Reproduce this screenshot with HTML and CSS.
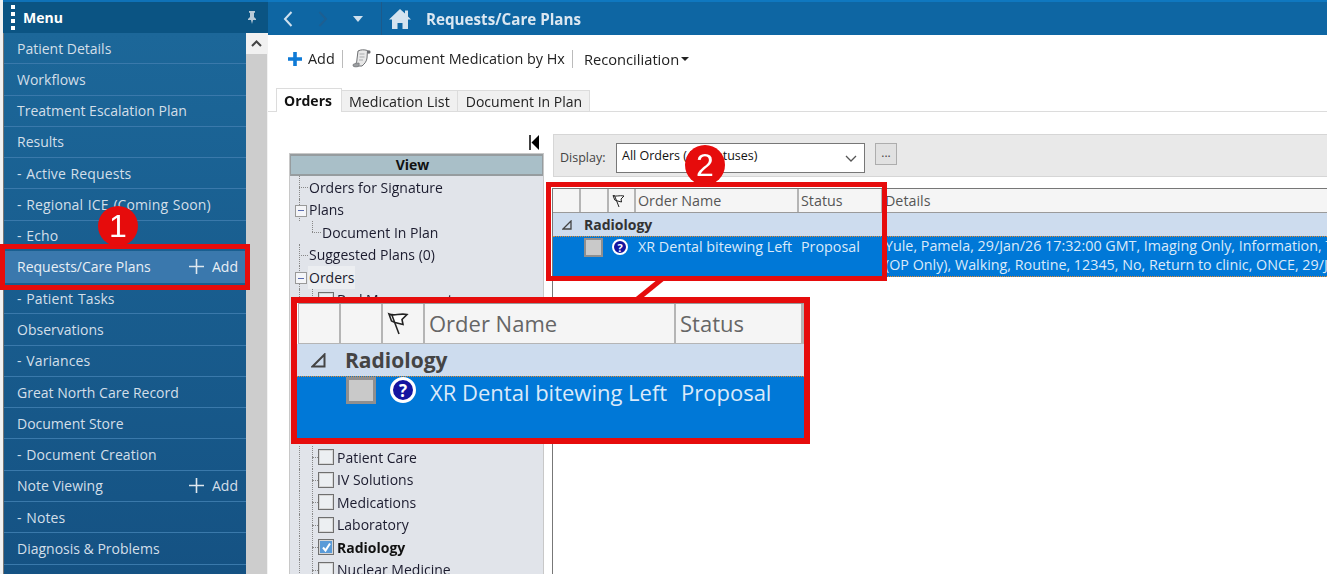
FILE: index.html
```html
<!DOCTYPE html>
<html lang="en">
<head>
<meta charset="utf-8">
<title>Requests/Care Plans</title>
<link rel="stylesheet" href="styles.css">
</head>
<body>
<div class="app">
  <aside class="side">
    <div class="menu-head">
      <span class="grip"><i></i><i></i><i></i><i></i></span>
      <span class="menu-title">Menu</span>
      <svg class="pin" width="10" height="13" viewBox="0 0 10 13"><path d="M2 0h6v1.500l-1 .5v4l2 2v1H6l-1 4-1-4H1V8l2-2V2l-1-.5z" fill="#b9cbd9"/></svg>
    </div>
    <div class="side-body">
      <nav class="nav">
        <div class="nav-row">Patient Details</div>
        <div class="nav-row">Workflows</div>
        <div class="nav-row">Treatment Escalation Plan</div>
        <div class="nav-row">Results</div>
        <div class="nav-row sub">- Active Requests</div>
        <div class="nav-row sub">- Regional ICE (Coming Soon)</div>
        <div class="nav-row sub">- Echo</div>
        <div class="nav-row active"><span>Requests/Care Plans</span><span class="add"><svg width="15" height="15" viewBox="0 0 15 15"><path d="M7.500 0v15M0 7.500h15" stroke="#dfe8ef" stroke-width="1.600"/></svg>Add</span></div>
        <div class="nav-row sub">- Patient Tasks</div>
        <div class="nav-row">Observations</div>
        <div class="nav-row sub">- Variances</div>
        <div class="nav-row">Great North Care Record</div>
        <div class="nav-row">Document Store</div>
        <div class="nav-row sub">- Document Creation</div>
        <div class="nav-row"><span>Note Viewing</span><span class="add"><svg width="15" height="15" viewBox="0 0 15 15"><path d="M7.500 0v15M0 7.500h15" stroke="#dfe8ef" stroke-width="1.600"/></svg>Add</span></div>
        <div class="nav-row sub">- Notes</div>
        <div class="nav-row">Diagnosis &amp; Problems</div>
        <div class="nav-row sub">- Allergies</div>
      </nav>
      <div class="scroll">
        <div class="scroll-btn"><svg width="11" height="7" viewBox="0 0 11 7"><path d="M1 6l4.500-4.500L10 6" fill="none" stroke="#444" stroke-width="2"/></svg></div>
      </div>
    </div>
  </aside>

  <main class="main">
    <header class="topbar">
      <div class="navbtns">
        <svg width="10" height="16" viewBox="0 0 10 16"><path d="M8.500 1L2 8l6.500 7" fill="none" stroke="#cfe0ee" stroke-width="2"/></svg>
        <svg width="10" height="16" viewBox="0 0 10 16"><path d="M1.500 1L8 8l-6.500 7" fill="none" stroke="#1d5f92" stroke-width="2"/></svg>
        <svg width="10" height="6" viewBox="0 0 10 6"><path d="M0 0h10L5 6z" fill="#cfe0ee"/></svg>
      </div>
      <svg class="home" width="22" height="20" viewBox="0 0 22 20"><path d="M11 0L0 10.500h3V20h5.500v-6h5v6H19v-9.500h3l-3-3V1.500h-3v3z" fill="#d4e3ef"/></svg>
      <h1 class="page-title">Requests/Care Plans</h1>
    </header>

    <div class="toolbar">
      <span class="tool"><svg width="14" height="14" viewBox="0 0 14 14"><path d="M7 0v14M0 7h14" stroke="#0e7ad6" stroke-width="3.600"/></svg>Add</span>
      <span class="tool-sep"></span>
      <span class="tool doc"><svg width="19" height="19" viewBox="0 0 19 19"><path d="M6 2c3-1.500 6-1.500 9.500-.5L15 9c-.3 3-2 5.500-5 8H2c2-2 3-4 3-7z" fill="#e8e8e8" stroke="#6d6f72"/><path d="M1 15.500c1.500-1 3.500-1.500 6-1.500.5 1 .3 2-.7 3.500-2 .7-4.300.5-5.300-.5z" fill="#9a9da0" stroke="#6d6f72" stroke-width=".6"/><path d="M7.500 5h5M7.500 8h5M7 11h4" stroke="#a9abae"/><circle cx="16.800" cy="3" r="1.800" fill="#6d6f72"/></svg>Document Medication by Hx</span>
      <span class="tool-sep"></span>
      <span class="tool recon">Reconciliation<i class="caret"></i></span>
    </div>

    <div class="tabs">
      <span class="tab current">Orders</span>
      <span class="tab">Medication List</span>
      <span class="tab last">Document In Plan</span>
    </div>

    <div class="content">
      <section class="view">
        <div class="collapse"><svg width="11" height="15" viewBox="0 0 11 15"><path d="M1 0v15" stroke="#000" stroke-width="1.500"/><path d="M10 0v15L2.500 7.500z" fill="#000"/></svg></div>
        <div class="view-panel">
          <div class="view-head">View</div>
          <ul class="tree">
            <li class="t0">Orders for Signature</li>
            <li class="t0 exp">Plans</li>
            <li class="t1">Document In Plan</li>
            <li class="t0">Suggested Plans (0)</li>
            <li class="t0 exp"><span class="hl">Orders</span></li>
            <li class="t2"><i class="cb"></i>Bed Management</li>
            <li class="gap"></li>
            <li class="t2"><i class="cb"></i>Patient Care</li>
            <li class="t2"><i class="cb"></i>IV Solutions</li>
            <li class="t2"><i class="cb"></i>Medications</li>
            <li class="t2"><i class="cb"></i>Laboratory</li>
            <li class="t2 strong"><i class="cb on"><svg width="11" height="11" viewBox="0 0 11 11"><path d="M2 5.500l2.500 3L9 1.500" fill="none" stroke="#fff" stroke-width="2"/></svg></i>Radiology</li>
            <li class="t2"><i class="cb"></i>Nuclear Medicine</li>
          </ul>
        </div>
      </section>

      <section class="orders">
        <div class="display">
          <span class="display-label">Display:</span>
          <span class="select">All Orders (All Statuses)<svg width="12" height="7" viewBox="0 0 12 7"><path d="M1 1l5 5 5-5" fill="none" stroke="#555" stroke-width="1.300"/></svg></span>
          <span class="more">...</span>
        </div>
        <div class="grid">
          <div class="g-head">
            <span class="c1"></span><span class="c2"></span>
            <span class="c3"><svg width="13" height="14" viewBox="0 0 13 14"><path d="M1 1.500c3 1.500 6-.5 11 .5L9 5l.5 3L5 6.800 2.800 6z" fill="#fff" stroke="#222"/><path d="M2.500 1.500L7 13" stroke="#222"/></svg></span>
            <span class="c4">Order Name</span><span class="c5">Status</span><span class="c6">Details</span>
          </div>
          <div class="g-group"><svg class="tri" width="10" height="10" viewBox="0 0 10 10"><path d="M1 9l8-8v8z" fill="none" stroke="#444" stroke-width="1.300"/></svg>Radiology</div>
          <div class="g-row">
            <span class="c1"></span>
            <span class="c2"><i class="gray-cb"></i></span>
            <span class="c3"><i class="q">?</i></span>
            <span class="c4">XR Dental bitewing Left</span>
            <span class="c5">Proposal</span>
            <span class="c6">Yule, Pamela, 29/Jan/26 17:32:00 GMT, Imaging Only, Information, Test<br>(OP Only), Walking, Routine, 12345, No, Return to clinic, ONCE, 29/Jan/26</span>
          </div>
        </div>
      </section>
    </div>
  </main>
</div>

<div class="hi hi-nav"></div>
<div class="hi hi-grid"></div>
<svg class="connector" width="40" height="24" viewBox="0 0 40 24"><path d="M33 0L6 22" stroke="#e60c0c" stroke-width="5"/></svg>
<div class="badge b1">1</div>
<div class="badge b2">2</div>

<div class="magnify">
  <div class="m-head">
    <span class="m1"></span><span class="m2"></span>
    <span class="m3"><svg width="22" height="24" viewBox="0 0 22 24"><path d="M2 3c5 2.500 10-1 18 .5L15 8.500l1 5-8-2-3.500-1.500z" fill="#fff" stroke="#222" stroke-width="1.600"/><path d="M4.500 3L12 23" stroke="#222" stroke-width="1.600"/></svg></span>
    <span class="m4">Order Name</span><span class="m5">Status</span>
  </div>
  <div class="m-group"><svg class="m-tri" width="15" height="15" viewBox="0 0 15 15"><path d="M1.500 13.500l12-12v12z" fill="none" stroke="#444" stroke-width="2"/></svg>Radiology</div>
  <div class="m-row">
    <i class="m-cb"></i><i class="m-q">?</i>
    <span class="m-name">XR Dental bitewing Left</span><span class="m-status">Proposal</span>
  </div>
</div>
</body>
</html>
```
FILE: styles.css
```css
* { box-sizing: border-box; }
html, body { margin: 0; height: 574px; overflow: hidden; background: #fff; }
body { font-family: "Open Sans", "Noto Sans", sans-serif; font-size: 14px; color: #222; position: relative; }
i { font-style: normal; }

.app { display: flex; height: 574px; filter: blur(0.35px); }

.side { width: 268px; flex: none; padding-left: 3px; background: #f2f2f2; display: flex; flex-direction: column; }
.menu-head { height: 33px; flex: none; background: #0b5483; border-top: 2px solid #0f72b8; display: flex; align-items: center; color: #fff; padding: 0 11px 0 8px; }
.grip { display: flex; flex-direction: column; gap: 3px; margin-right: 8px; }
.grip i { width: 4px; height: 4px; background: #fff; }
.menu-title { font-weight: 700; font-size: 14px; flex: 1; }
.side-body { flex: 1; display: flex; min-height: 0; border-left: 1px solid #777; }
.nav { width: 242px; flex: none; background: linear-gradient(#1c6799, #155283); overflow: hidden; }
.nav-row { height: 31.27px; padding: 0 8px 0 13px; display: flex; align-items: center; justify-content: space-between; border-bottom: 1px solid #3a79ab; color: #d3dfe9; font-size: 14px; white-space: nowrap; }
.nav-row.sub { letter-spacing: .1px; word-spacing: 1px; }
.nav-row.active { background: #3a78ad; color: #e8eff5; }
.add { display: flex; align-items: center; gap: 8px; }
.scroll { width: 21px; flex: none; background: #cdcdcd; }
.scroll-btn { height: 21px; background: #f1f1f1; display: flex; align-items: center; justify-content: center; }

.main { flex: 1; min-width: 0; display: flex; flex-direction: column; }
.topbar { height: 35px; flex: none; background: #0e66a3; border-top: 2px solid #0f78c0; display: flex; align-items: center; color: #dbe7f1; }
.navbtns { width: 114px; height: 100%; display: flex; align-items: center; gap: 25px; padding-left: 15px; border-right: 1px solid #1d5a8b; flex: none; }
.home { margin-left: 7px; }
.page-title { margin: 0 0 0 15px; font-size: 15.200px; font-weight: 700; }

.toolbar { height: 47px; flex: none; display: flex; align-items: center; padding-left: 20px; font-size: 14.400px; color: #222; }
.tool { display: flex; align-items: center; gap: 6px; }
.doc { gap: 4px; margin-left: 2px; }
.tool-sep { width: 1px; height: 18px; background: #bbb; margin: 0 7px; }
.recon { gap: 2px; margin-left: 4px; font-size: 14.700px; }
.caret { width: 0; height: 0; border: 4px solid transparent; border-top-color: #222; border-bottom: 0; }

.tabs { height: 24px; margin-top: 6px; flex: none; display: flex; align-items: flex-end; padding-left: 8px; border-bottom: 1px solid #dcdcdc; }
.tab { height: 21px; padding: 0 7px; background: #f0f0f0; border: 1px solid #dcdcdc; border-bottom: 0; border-left: 0; display: flex; align-items: center; font-size: 14.300px; color: #222; }
.tab.last { padding-left: 8px; font-size: 14px; }
.tab.current { height: 24px; padding-right: 9px; background: #fff; border-left: 1px solid #dcdcdc; font-weight: 700; margin-bottom: -1px; color: #111; font-size: 14px; }

.content { flex: 1; min-height: 0; display: flex; padding: 22px 0 0 21px; overflow: hidden; }
.view { width: 255px; flex: none; display: flex; flex-direction: column; }
.collapse { height: 19px; display: flex; justify-content: flex-end; padding-right: 4px; padding-top: 1px; align-items: flex-start; flex: none; }
.view-panel { flex: 1; background: #e1e4ea; border: 1px solid #c8c8c8; border-bottom: 0; overflow: hidden; }
.view-head { height: 22px; background: #a9bfc8; border: 2px solid #969c9f; border-width: 2px 1px; font-weight: 700; text-align: center; padding-right: 8px; line-height: 18px; color: #111; }
.tree { list-style: none; margin: 0; padding: 0; font-size: 14px; color: #1b1b2e; }
.tree li { height: 22.500px; display: flex; align-items: center; white-space: nowrap; position: relative; }
.t0 { padding-left: 19px; }
.t0::before, .t1::before, .t2::before { content: ""; position: absolute; border-top: 1px dotted #888; top: 50%; }
.t0::before { left: 9px; width: 9px; }
.t0::after, .t2::after { content: ""; position: absolute; left: 9px; top: 0; bottom: 0; border-left: 1px dotted #888; }
.t1 { padding-left: 32px; }
.t1::after { content: ""; position: absolute; left: 22px; top: 0; height: 50%; border-left: 1px dotted #888; }
.t1::before { left: 22px; width: 9px; }
.exp::before { left: 5px; width: 10px; height: 10px; margin-top: -5px; background: linear-gradient(#5a6bb0, #5a6bb0) center / 6px 1px no-repeat, #f4f5f8; border: 1px solid #999; z-index: 1; }
.exp > .hl { background: #eceef1; padding: 2px 1px; margin-left: -1px; }
.t2 { padding-left: 28px; background: repeating-linear-gradient(#888 0 1px, transparent 1px 2px) 22px 0 / 1px 100% no-repeat; }
.t2::before { left: 22px; width: 6px; }
.gap { height: 135px !important; }
.strong { font-weight: 700; color: #111; }
.cb { width: 16px; height: 16px; flex: none; background: #eceff2; border: 1px solid #6f6f6f; margin-right: 3px; display: flex; align-items: center; justify-content: center; box-shadow: inset 0 0 0 1px #d6d6d6; }
.cb.on { background: #5a9bd8; }

.orders { flex: 1; min-width: 0; margin-left: 8px; display: flex; flex-direction: column; }
.display { height: 43px; flex: none; background: #e9e9e9; border: 1px solid #d6d6d6; border-right: 0; margin-left: 1px; display: flex; align-items: flex-start; padding: 8px 0 0 6px; font-size: 12.500px; color: #444; }
.display-label { margin-top: 6px; width: 56px; flex: none; }
.select { width: 249px; height: 30px; border: 1px solid #777; background: #fff; display: flex; align-items: center; justify-content: space-between; padding: 0 7px 5px 5px; color: #111; }
.select svg { margin-top: 6px; }
.more { width: 22px; height: 22px; margin-left: 10px; background: #e1e1e1; border: 1px solid #adadad; text-align: center; font-size: 12px; }
.grid { margin-top: 11px; border-left: 1px solid #777; flex: 1; font-size: 14.300px; }
.g-head { height: 25px; display: flex; background: #f5f5f5; border-top: 1px solid #777; border-bottom: 1px solid #9a9a9a; color: #555; }
.g-head > span { border-right: 2px solid #b5b5b5; display: flex; align-items: center; padding-left: 3px; white-space: nowrap; }
.c1 { width: 28px; flex: none; }
.c2 { width: 28px; flex: none; }
.c3 { width: 27px; flex: none; }
.c4 { width: 163px; flex: none; }
.c5 { width: 84px; flex: none; }
.g-head > .c4 { padding-left: 2px; }
.g-head > .c5 { padding-left: 2px; }
.g-head > .c6 { flex: 1; border-right: 0; padding-left: 2px; }
.g-group { height: 23px; background: #cddcee; font-weight: 700; color: #333; display: flex; align-items: center; padding-left: 9px; font-size: 14px; }
.tri { margin-right: 12px; flex: none; }
.g-row { height: 41px; background: #0078d7; color: #dbeafa; display: flex; border-top: 1px dotted #e58b2e; border-bottom: 1px dotted #e58b2e; white-space: nowrap; overflow: hidden; }
.g-row > span { padding-left: 3px; height: 20px; display: flex; align-items: center; }
.g-row > .c3 { padding-left: 3px; }
.g-row > .c6 { display: block; flex: 1; padding-left: 2px; line-height: 18.500px; height: auto; }
.g-row > .c4 { padding-left: 2px; height: 19px; }
.g-row > .c5 { padding-left: 2px; height: 19px; }
.gray-cb { width: 19px; height: 19px; background: #c9c9c9; border: 2px solid #8f8f8f; }
.q { width: 16px; height: 16px; border-radius: 50%; background: #1414a0; border: 2px solid #fff; color: #fff; font-size: 11px; font-weight: 700; display: flex; align-items: center; justify-content: center; line-height: 1; }

.hi { position: absolute; border: 5px solid #e60c0c; }
.hi-nav { left: 0; top: 244px; width: 250px; height: 46px; }
.hi-grid { left: 546px; top: 182px; width: 341px; height: 99px; }
.connector { position: absolute; left: 629px; top: 279px; }
.badge { position: absolute; width: 40px; height: 40px; border-radius: 50%; background: #e60c0c; color: #fff; font-family: "Liberation Sans", sans-serif; font-size: 32px; line-height: 40px; text-align: center; }
.b1 { left: 98px; top: 206px; }
.b2 { left: 685px; top: 145px; }

.magnify { position: absolute; left: 291px; top: 297px; width: 519px; height: 147px; border: 6px solid #e60c0c; background: #fff; font-size: 22px; }
.m-head { height: 41px; display: flex; background: #f5f5f5; border: 1px solid #b5b5b5; border-top-color: #999; margin-left: 1px; color: #666; }
.m-head > span { border-right: 2px solid #b5b5b5; display: flex; align-items: center; padding: 0 0 2px 4px; white-space: nowrap; }
.m1, .m2 { width: 42px; flex: none; }
.m3 { width: 42px; flex: none; }
.m4 { width: 251px; flex: none; }
.m5 { flex: 1; }
.m-group { height: 32px; background: #cddcee; font-weight: 700; font-size: 21px; color: #444; display: flex; align-items: center; padding-left: 14px; }
.m-tri { margin-right: 19px; flex: none; }
.m-row { height: 62px; background: #0078d7; color: #dbeafa; display: flex; align-items: flex-start; border-top: 1px dotted #e58b2e; }
.m-cb { width: 30px; height: 27px; margin-left: 49px; background: #c9c9c9; border: 3px solid #8f8f8f; flex: none; }
.m-q { width: 26px; height: 26px; margin-left: 14px; border-radius: 50%; background: #1414a0; border: 3px solid #fff; color: #fff; font-size: 17px; font-weight: 700; display: flex; align-items: center; justify-content: center; flex: none; }
.m-name { margin-left: 14px; width: 251px; line-height: 30px; white-space: nowrap; }
.m-status { line-height: 30px; }
```
